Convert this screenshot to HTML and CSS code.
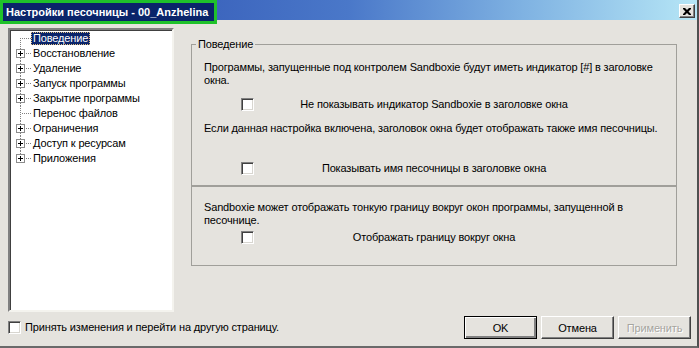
FILE: index.html
```html
<!DOCTYPE html>
<html lang="ru">
<head>
    <meta charset="UTF-8">
    <title>Настройки песочницы - 00_Anzhelina</title>
    <link rel="stylesheet" href="styles.css">
</head>
<body>
    <div class="window">
        <div class="titlebar">
            <span class="title">Настройки песочницы - 00_Anzhelina</span>
            <span class="close-btn">
                <svg width="8" height="7" viewBox="0 0 8 7">
                    <path d="M0 0h2l2 2 2-2h2v1l-2.5 2.5L8 6v1H6L4 5 2 7H0V6l2.5-2.5L0 1z" fill="#000"/>
                </svg>
            </span>
        </div>

        <div class="main">
            <div class="tree">
                <ul>
                    <li class="first"><span class="twig"></span><span class="label selected">Поведение</span></li>
                    <li><span class="twig"><span class="plus"></span></span><span class="label">Восстановление</span></li>
                    <li><span class="twig"><span class="plus"></span></span><span class="label">Удаление</span></li>
                    <li><span class="twig"><span class="plus"></span></span><span class="label">Запуск программы</span></li>
                    <li><span class="twig"><span class="plus"></span></span><span class="label">Закрытие программы</span></li>
                    <li><span class="twig"></span><span class="label">Перенос файлов</span></li>
                    <li><span class="twig"><span class="plus"></span></span><span class="label">Ограничения</span></li>
                    <li><span class="twig"><span class="plus"></span></span><span class="label">Доступ к ресурсам</span></li>
                    <li class="last"><span class="twig"><span class="plus"></span></span><span class="label">Приложения</span></li>
                </ul>
            </div>

            <div class="pages">
                <fieldset class="group">
                    <legend>Поведение</legend>
                    <p>Программы, запущенные под контролем Sandboxie будут иметь индикатор [#] в заголовке окна.</p>
                    <div class="check-row">
                        <span class="checkbox"></span>
                        <span class="check-label">Не показывать индикатор Sandboxie в заголовке окна</span>
                    </div>
                    <p class="note">Если данная настройка включена, заголовок окна будет отображать также имя песочницы.</p>
                    <div class="check-row far">
                        <span class="checkbox"></span>
                        <span class="check-label">Показывать имя песочницы в заголовке окна</span>
                    </div>
                </fieldset>

                <fieldset class="group plain">
                    <p>Sandboxie может отображать тонкую границу вокруг окон программы, запущенной в песочнице.</p>
                    <div class="check-row near">
                        <span class="checkbox"></span>
                        <span class="check-label">Отображать границу вокруг окна</span>
                    </div>
                </fieldset>
            </div>
        </div>

        <div class="footer">
            <label class="apply">
                <span class="checkbox"></span>
                Принять изменения и перейти на другую страницу.
            </label>
            <div class="buttons">
                <button class="btn default">OK</button>
                <button class="btn">Отмена</button>
                <button class="btn" disabled>Применить</button>
            </div>
        </div>
    </div>
</body>
</html>
```

FILE: styles.css
```css
* {
    margin: 0;
    padding: 0;
    box-sizing: border-box;
}

body {
    background-color: #e5e3de;
    font-family: "Liberation Sans", Arial, sans-serif;
    font-size: 11px;
    line-height: 13px;
    letter-spacing: -0.15px;
    color: #000;
    overflow: hidden;
}

.window {
    width: 699px;
    height: 348px;
    background: #e5e3de;
    border-right: 2px solid #505050;
    border-bottom: 2px solid #6a6a6a;
    display: flex;
    flex-direction: column;
}

/* title bar */
.titlebar {
    height: 20px;
    flex: none;
    display: flex;
    align-items: flex-start;
    justify-content: space-between;
    background: linear-gradient(to right, #0a246a 0%, #3d66be 31%, #4a78c9 50%, #7fb2e2 75%, #b6e6f6 100%);
    position: relative;
    z-index: 2;
}

.title {
    height: 24px;
    width: 217px;
    padding: 2px 0 0 3px;
    background: #0a246a;
    border: 3px solid #1fc12b;
    color: #fff;
    font-weight: bold;
    font-size: 11px;
    line-height: 14px;
    letter-spacing: 0;
    white-space: nowrap;
}

.close-btn {
    width: 16px;
    height: 14px;
    margin: 4px 2px 0 0;
    background: #e5e3de;
    border: 1px solid;
    border-color: #fff #404040 #404040 #fff;
    box-shadow: inset -1px -1px 0 #808080;
    display: flex;
    align-items: center;
    justify-content: center;
}

/* main area */
.main {
    display: flex;
    padding: 8px 0 0 8px;
    height: 292px;
    flex: none;
}

.tree {
    width: 166px;
    height: 284px;
    background: #fff;
    border: 2px solid;
    border-color: #808080 #f4f3ee #f4f3ee #808080;
    box-shadow: inset 1px 1px 0 #404040;
    flex: none;
}

.tree ul {
    list-style: none;
    padding: 1px 0 0 6px;
}

.tree li {
    display: flex;
    align-items: center;
    height: 15px;
}

.twig {
    width: 15px;
    height: 15px;
    flex: none;
    position: relative;
}

.twig::before {
    content: "";
    position: absolute;
    left: 4px;
    top: 0;
    bottom: 0;
    width: 1px;
    background: repeating-linear-gradient(to bottom, #808080 0 1px, transparent 1px 2px);
}

.first .twig::before {
    top: 7px;
}

.last .twig::before {
    bottom: 8px;
}

.twig::after {
    content: "";
    position: absolute;
    left: 5px;
    right: 0;
    top: 7px;
    height: 1px;
    background: repeating-linear-gradient(to right, transparent 0 1px, #808080 1px 2px);
}

.plus {
    position: absolute;
    left: 0;
    top: 3px;
    width: 9px;
    height: 9px;
    border: 1px solid #8c8c8c;
    background: #fff;
    z-index: 1;
}

.plus::before {
    content: "";
    position: absolute;
    left: 1px;
    top: 3px;
    width: 5px;
    height: 1px;
    background: #000;
}

.plus::after {
    content: "";
    position: absolute;
    left: 3px;
    top: 1px;
    width: 1px;
    height: 5px;
    background: #000;
}

.label {
    padding: 0 2px;
    line-height: 13px;
    white-space: nowrap;
}

.label.selected {
    background: #0a246a;
    color: #fff;
    outline: 1px dotted #e0c080;
    outline-offset: -1px;
}

/* settings page */
.pages {
    margin: 10px 0 0 17px;
    width: 486px;
}

.group {
    border: 1px solid #a09f9a;
    padding: 10px 12px 10px 12px;
    height: 148px;
}

.group legend {
    margin-left: -8px;
    padding: 0 2px;
    line-height: 13px;
}

.group.plain {
    height: 80px;
    padding: 14px 12px 0 12px;
}

.check-row {
    display: flex;
    align-items: center;
    margin-top: 11px;
    height: 13px;
}

.check-row.far {
    margin-top: 27px;
}

.check-row.near {
    margin-top: 4px;
}

.check-row .checkbox {
    margin-left: 37px;
}

.check-label {
    width: 358px;
    margin-left: 1px;
    text-align: center;
    white-space: nowrap;
}

.note {
    margin-top: 11px;
}

.checkbox {
    display: inline-block;
    width: 13px;
    height: 13px;
    flex: none;
    background: #fff;
    border: 1px solid;
    border-color: #808080 #fff #fff #808080;
    box-shadow: inset 1px 1px 0 #404040, inset -1px -1px 0 #d8d6d0;
}

/* footer */
.footer {
    display: flex;
    align-items: center;
    justify-content: space-between;
    height: 23px;
    margin-top: 4px;
    padding: 0 6px 0 8px;
}

.apply {
    display: flex;
    align-items: center;
    gap: 4px;
    white-space: nowrap;
}

.buttons {
    display: flex;
    gap: 4px;
}

.btn {
    width: 73px;
    height: 23px;
    font-family: "Liberation Sans", Arial, sans-serif;
    font-size: 11px;
    letter-spacing: -0.15px;
    background: #e5e3de;
    color: #000;
    border: 1px solid;
    border-color: #fff #404040 #404040 #fff;
    box-shadow: inset -1px -1px 0 #808080;
}

.btn.default {
    border-color: #000;
    box-shadow: inset 1px 1px 0 #fff, inset -2px -2px 0 #808080;
}

.btn:disabled {
    color: #a6a59f;
    text-shadow: 1px 1px 0 #fff;
}
```
